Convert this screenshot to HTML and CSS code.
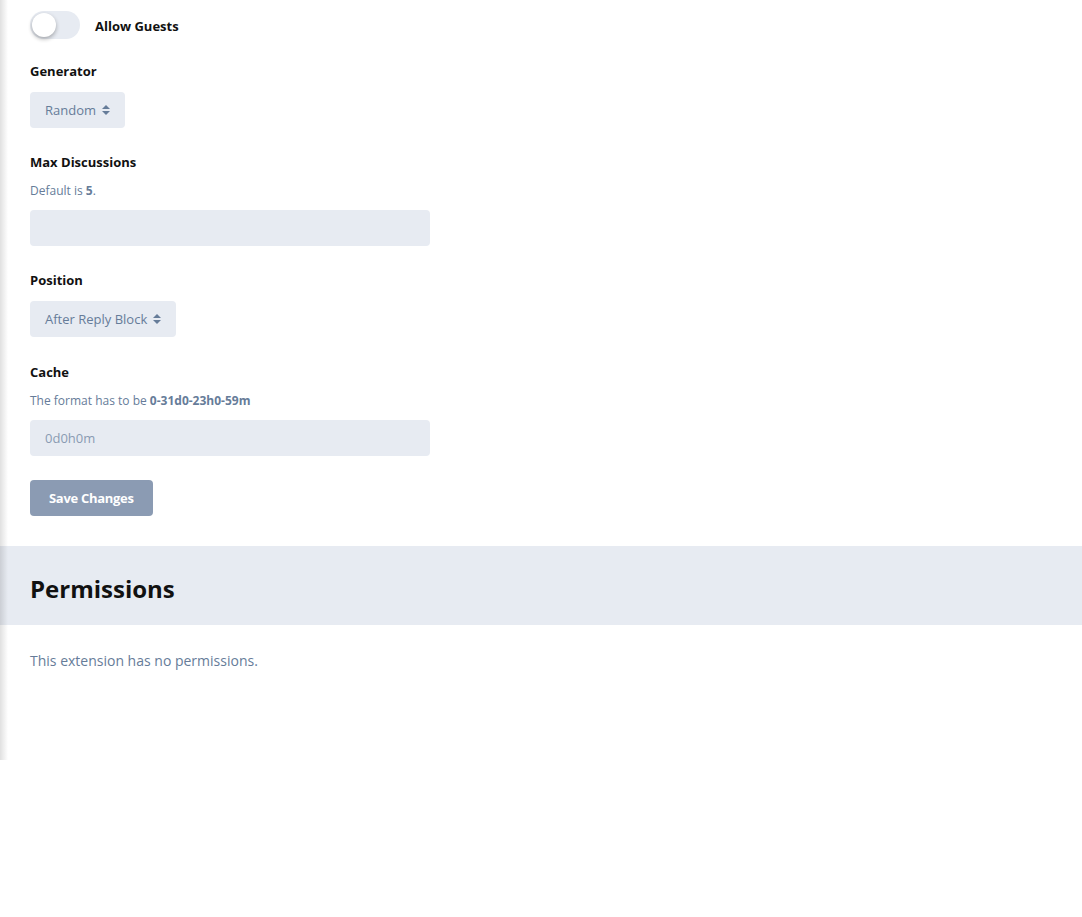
FILE: index.html
```html
<!DOCTYPE html>
<html>
<head>
<meta charset="utf-8">
<link rel="stylesheet" href="styles.css">
</head>
<body>
<div class="page">
  <div class="settings">
    <div class="form-group switch-row">
      <span class="switch"><span class="knob"></span></span>
      <span class="switch-label">Allow Guests</span>
    </div>
    <div class="form-group">
      <label class="label">Generator</label>
      <div class="select">Random <svg class="caret" width="8" height="12" viewBox="0 0 8 12"><path d="M0 5 L4 1 L8 5 Z M0 7 L8 7 L4 11 Z" fill="#667c99"/></svg></div>
    </div>
    <div class="form-group">
      <label class="label">Max Discussions</label>
      <div class="help">Default is <b>5</b>.</div>
      <div class="input"></div>
    </div>
    <div class="form-group">
      <label class="label">Position</label>
      <div class="select">After Reply Block <svg class="caret" width="8" height="12" viewBox="0 0 8 12"><path d="M0 5 L4 1 L8 5 Z M0 7 L8 7 L4 11 Z" fill="#667c99"/></svg></div>
    </div>
    <div class="form-group cache">
      <label class="label">Cache</label>
      <div class="help">The format has to be <b>0-31d0-23h0-59m</b></div>
      <div class="input placeholder">0d0h0m</div>
    </div>
    <button class="btn">Save Changes</button>
  </div>
  <div class="band"><h2>Permissions</h2></div>
  <p class="none">This extension has no permissions.</p>
</div>
</body>
</html>
```
FILE: styles.css
```css
html, body { margin: 0; padding: 0; background: #fff; }
body { font-family: "Open Sans", "Noto Sans", sans-serif; color: #111; }
.page { position: relative; min-height: 760px; }
.page::before {
  content: ""; position: absolute; left: 0; top: 0; width: 8px; height: 762px;
  background: linear-gradient(to right, rgba(0,0,0,0.12), rgba(0,0,0,0));
  z-index: 2;
}
.settings { padding: 11px 30px 30px; }
.form-group { margin-bottom: 25px; }
.form-group.cache { margin-bottom: 24px; padding-top: 1px; }
.cache .help { margin-top: 4px; margin-bottom: 11px; }
.switch-row { display: flex; align-items: center; gap: 15px; margin-bottom: 23px; }
.switch { position: relative; width: 50px; height: 28px; border-radius: 14px; background: #e7ebf2; display: block; }
.knob { position: absolute; left: 2px; top: 2px; width: 24px; height: 24px; border-radius: 50%; background: #fff; box-shadow: 0 2px 4px rgba(0,0,0,0.3); }
.switch-label { font-size: 13px; font-weight: 700; position: relative; top: 1px; }
.label { display: block; font-size: 13px; font-weight: 700; line-height: 18px; margin-bottom: 12px; }
.help { font-size: 12px; color: #667c99; line-height: 16px; margin-top: 1px; margin-bottom: 11px; }
.help b { font-weight: 700; }
.select { display: inline-flex; align-items: center; gap: 6px; height: 36px; padding: 0 15px; box-sizing: border-box; background: #e7ebf2; border-radius: 4px; font-size: 13px; color: #667c99; }
.caret { display: block; }
.input { width: 400px; height: 36px; box-sizing: border-box; background: #e7ebf2; border-radius: 4px; padding: 0 15px; font-size: 13px; line-height: 36px; color: #8a9bb3; }
.btn { display: block; height: 36px; padding: 0 19px; border: 0; border-radius: 4px; background: #8b9bb3; color: #fff; font-family: inherit; font-size: 13px; font-weight: 700; letter-spacing: -0.3px; }
.band { background: #e7ebf2; height: 79px; box-sizing: border-box; padding: 6px 30px 0; display: flex; align-items: center; }
.band h2 { margin: 0; font-size: 24px; font-weight: 700; color: #111; }
.none { margin: 26px 30px 0; font-size: 14px; color: #667c99; }
```
